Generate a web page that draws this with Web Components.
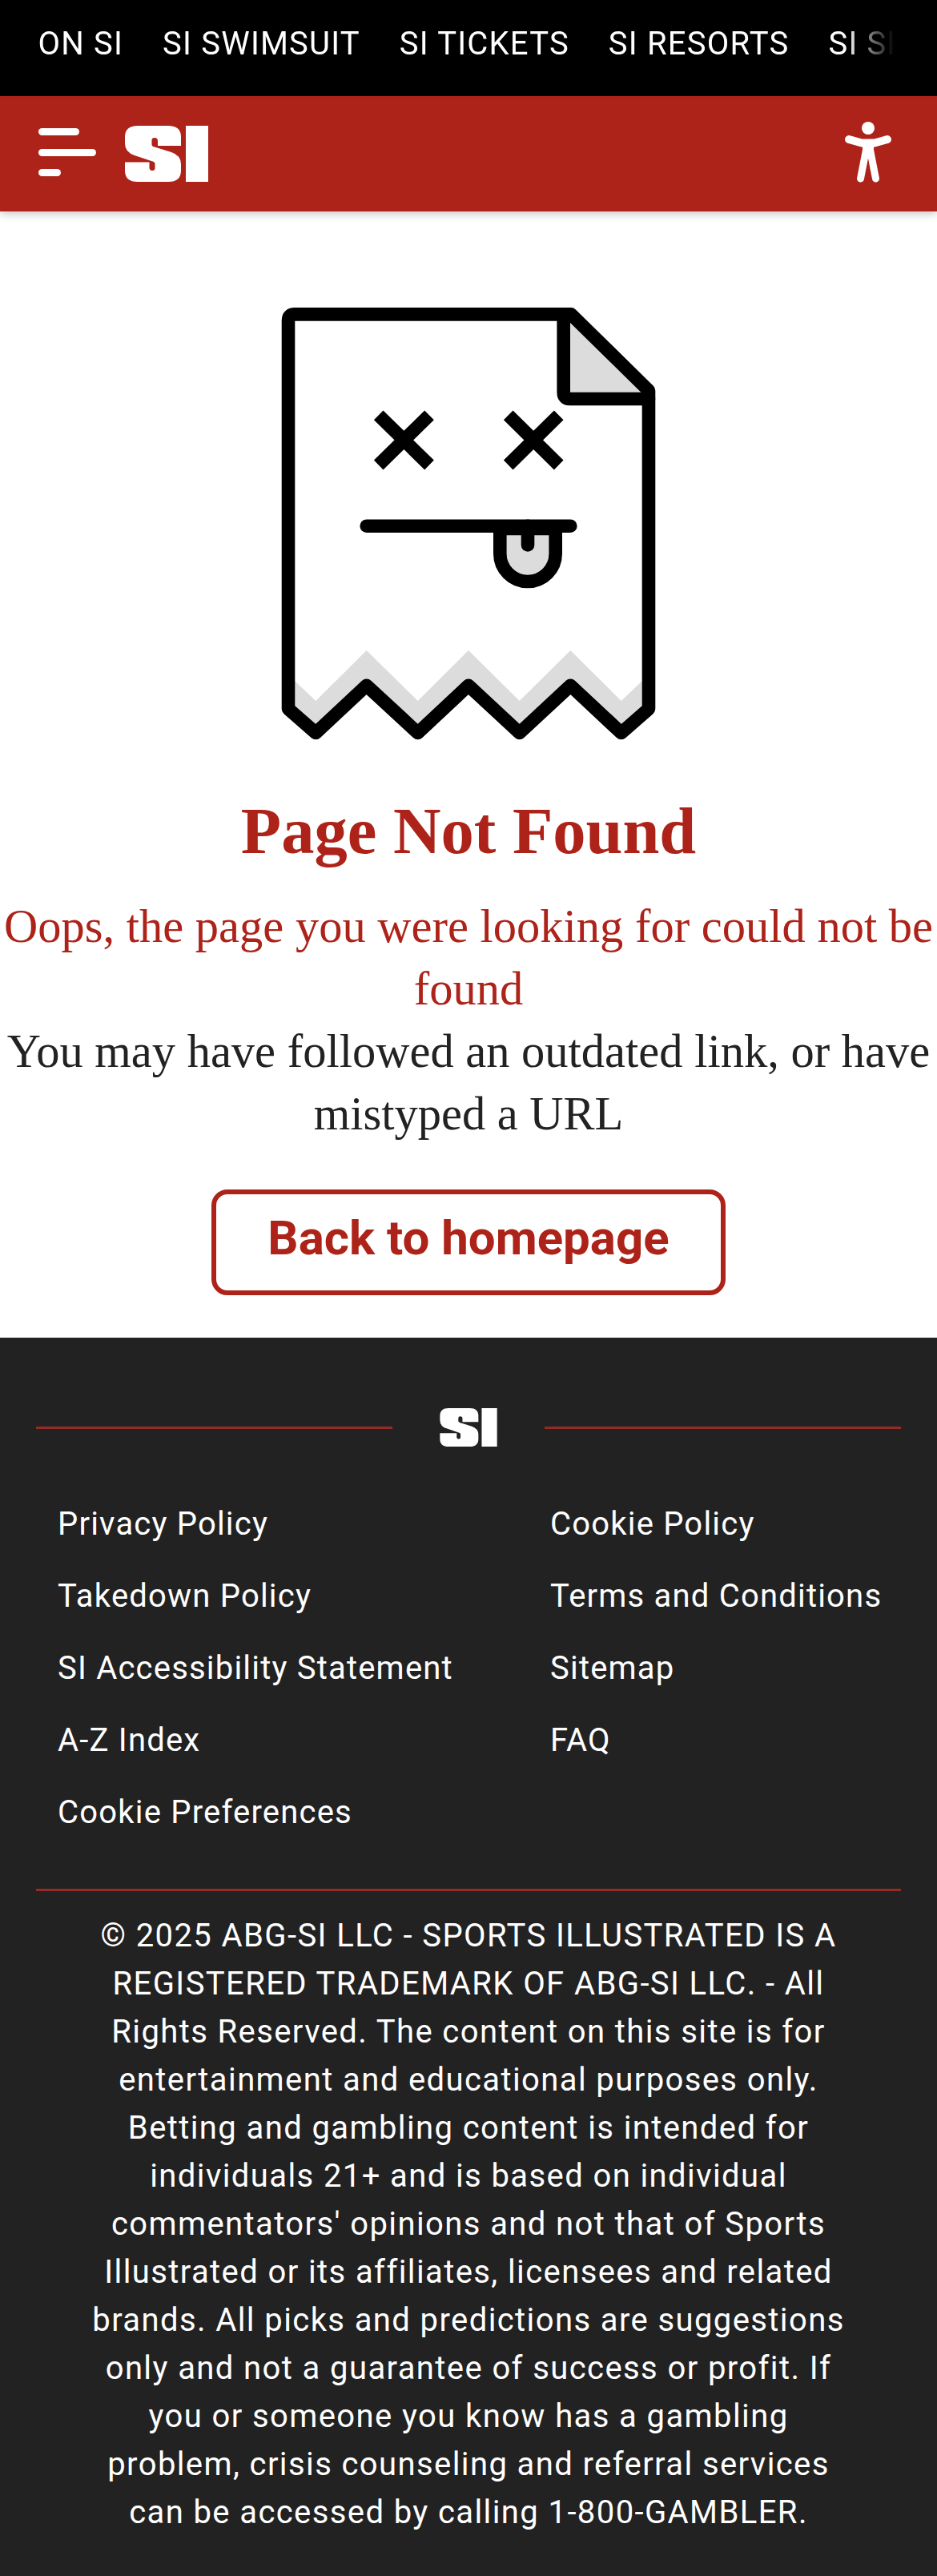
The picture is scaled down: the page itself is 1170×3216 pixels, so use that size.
<!doctype html>
<html lang="en">
<head>
<meta charset="utf-8">
<title>Page Not Found</title>
<style>
    html, body { margin: 0; padding: 0; background: #fff; }
</style>
</head>
<body>
<site-topnav>
    <a>ON SI</a>
    <a>SI SWIMSUIT</a>
    <a>SI TICKETS</a>
    <a>SI RESORTS</a>
    <a>SI SHOP</a>
</site-topnav>
<site-header></site-header>
<not-found>
    <span slot="title">Page Not Found</span>
    <span slot="oops">Oops, the page you were looking for could not be found</span>
    <span slot="hint">You may have followed an outdated link, or have mistyped a URL</span>
    <span slot="action">Back to homepage</span>
</not-found>
<site-footer>
    <footer-link slot="left">Privacy Policy</footer-link>
    <footer-link slot="left">Takedown Policy</footer-link>
    <footer-link slot="left">SI Accessibility Statement</footer-link>
    <footer-link slot="left">A-Z Index</footer-link>
    <footer-link slot="left">Cookie Preferences</footer-link>
    <footer-link slot="right">Cookie Policy</footer-link>
    <footer-link slot="right">Terms and Conditions</footer-link>
    <footer-link slot="right">Sitemap</footer-link>
    <footer-link slot="right">FAQ</footer-link>
    <span slot="legal">© 2025 ABG-SI LLC - SPORTS ILLUSTRATED IS A<br>REGISTERED TRADEMARK OF ABG-SI LLC. - All<br>Rights Reserved. The content on this site is for<br>entertainment and educational purposes only.<br>Betting and gambling content is intended for<br>individuals 21+ and is based on individual<br>commentators' opinions and not that of Sports<br>Illustrated or its affiliates, licensees and related<br>brands. All picks and predictions are suggestions<br>only and not a guarantee of success or profit. If<br>you or someone you know has a gambling<br>problem, crisis counseling and referral services<br>can be accessed by calling 1-800-GAMBLER.</span>
</site-footer>

<script>
class SiLogo extends HTMLElement {
    constructor(){
        super();
        this.shadowDOM = this.attachShadow({mode:"open"});
    }

    connectedCallback(){
        this.shadowDOM.innerHTML = `
        <style>
            :host { display: block; line-height: 0; }
            svg { width: 100%; height: 100%; display: block; }
        </style>
        <svg viewBox="0 0 104 70" role="img" aria-label="SI" fill="#fff">
            <path d="M70 25 H41 V19 Q41 15 37 15 Q33 15 33.5 19 V24 Q34 26 37 26.5 L58 33 Q70 37 70 48 V56 Q70 70 54 70 H16 Q0 70 0 56 V45.5 H30.5 V52 Q30.5 56 34 56 Q38 56 37.5 52 V47 Q37 45 33 44 L12 37 Q0 33 0 22 V14 Q0 0 16 0 H54 Q70 0 70 14 Z"/>
            <path d="M76 0 H104 V70 H76 Z"/>
        </svg>
        `;
    }
}

class SiteTopnav extends HTMLElement {
    constructor(){
        super();
        this.shadowDOM = this.attachShadow({mode:"open"});
    }

    connectedCallback(){
        this.shadowDOM.innerHTML = `
        <style>
            :host {
                display: block;
                height: 120px;
                background: #000;
                box-sizing: border-box;
                padding: 0 53px 10px 47.5px;
            }
            .scroller {
                height: 100%;
                display: flex;
                align-items: center;
                gap: 49px;
                overflow: hidden;
                white-space: nowrap;
                color: #fff;
                font: 400 40px/1.2 Roboto, sans-serif;
                letter-spacing: 1.2px;
                -webkit-mask-image: linear-gradient(to right, #000 calc(100% - 62px), transparent 100%);
                mask-image: linear-gradient(to right, #000 calc(100% - 62px), transparent 100%);
            }
        </style>
        <div class="scroller"><slot></slot></div>
        `;
    }
}

class SiteHeader extends HTMLElement {
    constructor(){
        super();
        this.shadowDOM = this.attachShadow({mode:"open"});
    }

    connectedCallback(){
        this.shadowDOM.innerHTML = `
        <style>
            :host {
                display: flex;
                align-items: center;
                height: 144px;
                box-sizing: border-box;
                padding: 0 52px 0 48px;
                background: #ad2319;
                box-shadow: 0 3px 10px rgba(0,0,0,.22);
                position: relative;
            }
            .burger {
                display: flex;
                flex-direction: column;
                gap: 16.5px;
                width: 72px;
                margin-top: -4px;
            }
            .burger i {
                display: block;
                height: 9px;
                border-radius: 5px;
                background: #fff;
            }
            si-logo {
                width: 104px;
                height: 70px;
                margin-left: 36px;
            }
            .access {
                width: 68px;
                height: 80px;
                margin-left: auto;
            }
        </style>
        <div class="burger">
            <i style="width:51px"></i>
            <i style="width:72px"></i>
            <i style="width:28px"></i>
        </div>
        <si-logo></si-logo>
        <svg class="access" viewBox="1050 150 68 80" aria-label="Accessibility">
            <circle cx="1084" cy="158" r="8" fill="#fff"/>
            <g fill="none" stroke="#fff" stroke-linecap="round" stroke-linejoin="round">
                <path d="M1060 172 L1076 176.5 H1092 L1108 172" stroke-width="10"/>
                <path d="M1081.5 185 L1074.5 221 M1086.5 185 L1093.5 221" stroke-width="9"/>
            </g>
            <rect x="1077" y="175" width="14" height="20" fill="#fff"/>
        </svg>
        `;
    }
}

class NotFound extends HTMLElement {
    constructor(){
        super();
        this.shadowDOM = this.attachShadow({mode:"open"});
    }

    connectedCallback(){
        this.shadowDOM.innerHTML = `
        <style>
            :host {
                display: flex;
                flex-direction: column;
                align-items: center;
                padding: 96px 0 53px;
                text-align: center;
                background: #fff;
            }
            svg { width: 510px; height: 580px; display: block; }
            h1 {
                margin: 47px 0 31px;
                font: 700 82.5px/100px "Liberation Serif", serif;
                color: #ad2319;
            }
            p {
                margin: 0;
                font: 400 58.5px/78px "Liberation Serif", serif;
            }
            .oops { color: #ad2319; }
            .hint { color: #222; }
            .btn {
                margin-top: 55px;
                width: 642px;
                height: 132px;
                box-sizing: border-box;
                padding-bottom: 11px;
                display: flex;
                align-items: center;
                justify-content: center;
                border: 6px solid #ad2319;
                border-radius: 20px;
                color: #ad2319;
                font: 700 60px/1 Roboto, sans-serif;
            }
        </style>
        <svg viewBox="0 0 510 580" aria-hidden="true">
            <polygon fill="#dcdcdc" points="38,490 64.3,515 127.7,452 191.7,515 255,452 318.7,515 382.3,452 445.7,515 472,490 472,525 445.7,555 382.3,496 318.7,555 255,496 191.7,555 127.7,496 64.3,555 38,525"/>
            <polygon fill="#dcdcdc" points="382,40.7 471.7,130 382,130"/>
            <g fill="none" stroke="#000" stroke-width="16.6" stroke-linejoin="round" stroke-linecap="round">
                <path d="M38 32.4 H383 L480 127.6 V525 L445.7 555 L382.3 495.8 L318.7 555 L255 495.8 L191.7 555 L127.7 495.8 L64.3 555 L30 525 V40 Q30 32.4 38 32.4 Z"/>
                <path d="M373.7 32.4 V130 Q373.7 138 381.5 138 H480"/>
                <path d="M127.7 296.7 H382.3"/>
            </g>
            <g stroke="#000" stroke-width="16.6">
                <path d="M142.7 158.4 L206 220.5 M206 158.4 L142.7 220.5 M304.7 158.4 L367.7 220.5 M367.7 158.4 L304.7 220.5"/>
            </g>
            <path d="M294.3 300 V331.3 A34.7 34.7 0 0 0 363.7 331.3 V300 Z" fill="#dcdcdc" stroke="#000" stroke-width="16.6"/>
            <path d="M329 296.7 V320.5" fill="none" stroke="#000" stroke-width="16.6" stroke-linecap="round"/>
        </svg>
        <h1><slot name="title"></slot></h1>
        <p class="oops"><slot name="oops"></slot></p>
        <p class="hint"><slot name="hint"></slot></p>
        <a class="btn"><slot name="action"></slot></a>
        `;
    }
}

class FooterLink extends HTMLElement {
    constructor(){
        super();
        this.shadowDOM = this.attachShadow({mode:"open"});
    }

    connectedCallback(){
        this.shadowDOM.innerHTML = `
        <style>
            :host {
                display: block;
                height: 90px;
                line-height: 90px;
                white-space: nowrap;
                letter-spacing: 1.2px;
            }
        </style>
        <slot></slot>
        `;
    }
}

class SiteFooter extends HTMLElement {
    constructor(){
        super();
        this.shadowDOM = this.attachShadow({mode:"open"});
    }

    connectedCallback(){
        this.shadowDOM.innerHTML = `
        <style>
            :host {
                display: block;
                box-sizing: border-box;
                padding: 88px 45px 50px;
                background: #222;
                color: #fff;
                font: 400 40px/60px Roboto, sans-serif;
                letter-spacing: 1.4px;
            }
            .brand {
                display: flex;
                align-items: center;
                gap: 59px;
            }
            .brand hr, .rule {
                flex: 1;
                height: 3px;
                margin: 0;
                border: 0;
                background: #982a26;
            }
            .brand si-logo { width: 72px; height: 48px; }
            .links {
                display: grid;
                grid-template-columns: 615px 1fr;
                padding-left: 27px;
                margin: 52px 0 50px;
            }
            .legal {
                margin-top: 26px;
                text-align: center;
            }
        </style>
        <div class="brand">
            <hr>
            <si-logo></si-logo>
            <hr>
        </div>
        <div class="links">
            <div><slot name="left"></slot></div>
            <div><slot name="right"></slot></div>
        </div>
        <hr class="rule">
        <div class="legal"><slot name="legal"></slot></div>
        `;
    }
}

customElements.define("si-logo", SiLogo);
customElements.define("site-topnav", SiteTopnav);
customElements.define("site-header", SiteHeader);
customElements.define("not-found", NotFound);
customElements.define("footer-link", FooterLink);
customElements.define("site-footer", SiteFooter);
</script>
</body>
</html>
